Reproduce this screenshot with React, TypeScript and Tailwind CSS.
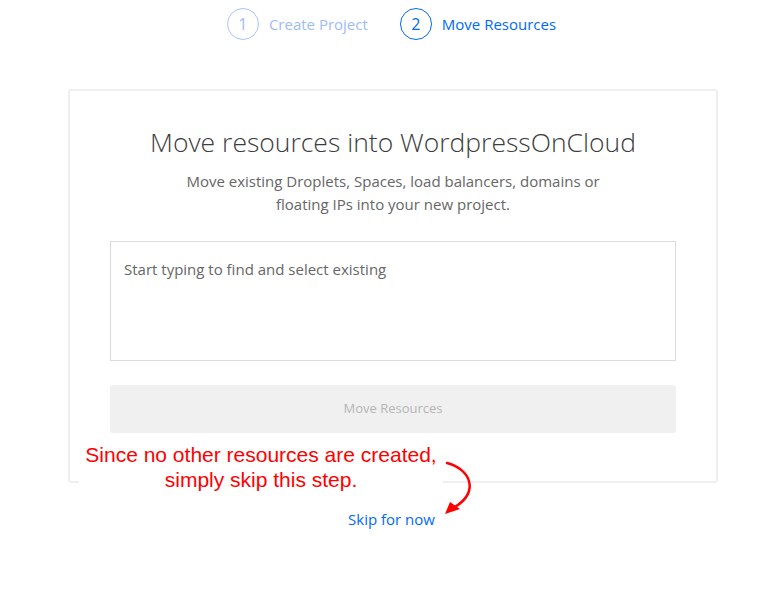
export default function App() {
  return (
    <div className="relative w-[783px] h-[613px] bg-white overflow-hidden font-['Open_Sans','Lato',sans-serif]">
      {/* Stepper */}
      <div className="flex justify-center items-center gap-8 pt-2">
        <div className="flex items-center gap-[10px]">
          <div className="h-8 w-8 rounded-full border border-[#a9c4fc] flex items-center justify-center text-[16px] text-[#9dbbfb]">
            1
          </div>
          <span className="text-[15px] text-[#9dbbfb]">Create Project</span>
        </div>
        <div className="flex items-center gap-[10px]">
          <div className="h-8 w-8 rounded-full border border-[#0069ff] flex items-center justify-center text-[16px] text-[#0069ff]">
            2
          </div>
          <span className="text-[15px] text-[#0069ff]">Move Resources</span>
        </div>
      </div>

      {/* Card */}
      <div className="ml-[68px] mt-[49px] w-[650px] h-[394px] border-2 border-[#efefef] rounded-[3px] px-10 pt-[35px]">
        <h1 className="text-center text-[26.5px] leading-8 font-light text-[#3d3d3d]">
          Move resources into WordpressOnCloud
        </h1>
        <p className="mt-3 mx-auto w-[430px] text-center text-[15px] leading-[23px] text-[#666]">
          Move existing Droplets, Spaces, load balancers, domains or floating IPs into your new project.
        </p>
        <div className="mt-[25px] h-[120px] border border-[#dcdcdc] px-[13px] pt-4 text-[15px] leading-[22px] text-[#666]">
          Start typing to find and select existing
        </div>
        <div className="mt-6 h-12 rounded-[3px] bg-[#f0f0f0] flex items-center justify-center text-[13px] text-[#b5b5b5]">
          Move Resources
        </div>
      </div>

      <div className="mt-[26px] text-center text-[15px] leading-5 text-[#0069ff]">Skip for now</div>

      {/* Annotation */}
      <div className="absolute left-[79px] top-[442px] w-[364px] h-[52px] bg-white flex flex-col items-center font-['Liberation_Sans',Arial,sans-serif] text-[21px] leading-[25px] text-[#ff0000]">
        <span className="whitespace-nowrap">Since no other resources are created,</span>
        <span>simply skip this step.</span>
      </div>
      <svg className="absolute left-[440px] top-[455px]" width="40" height="65" viewBox="0 0 40 65">
        <path d="M7 8 C 30 14, 40 36, 15 52" fill="none" stroke="#ff0000" strokeWidth="2.5" strokeLinecap="round" />
        <polygon points="5,59 10,47 20,54" fill="#ff0000" />
      </svg>
    </div>
  );
}
